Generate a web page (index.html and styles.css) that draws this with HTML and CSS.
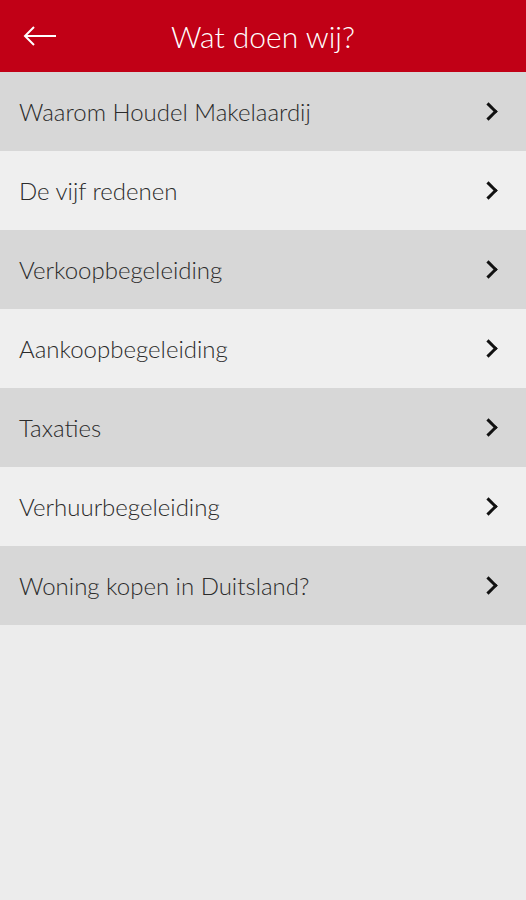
FILE: index.html
```html
<!DOCTYPE html>
<html lang="nl">
<head>
  <meta charset="UTF-8">
  <meta name="viewport" content="width=device-width, initial-scale=1.0">
  <title>Wat doen wij?</title>
  <link rel="stylesheet" href="styles.css">
</head>
<body>

  <header class="topbar">
    <span class="back">
      <svg width="34" height="20" viewBox="0 0 34 20"><path d="M33 10H2M11 1L2 10l9 9" fill="none" stroke="#fff" stroke-width="2"/></svg>
    </span>
    <h1>Wat doen wij?</h1>
  </header>

  <ul class="menu">
    <li class="row"><span>Waarom Houdel Makelaardij</span><i class="chev"></i></li>
    <li class="row"><span>De vijf redenen</span><i class="chev"></i></li>
    <li class="row"><span>Verkoopbegeleiding</span><i class="chev"></i></li>
    <li class="row"><span>Aankoopbegeleiding</span><i class="chev"></i></li>
    <li class="row"><span>Taxaties</span><i class="chev"></i></li>
    <li class="row"><span>Verhuurbegeleiding</span><i class="chev"></i></li>
    <li class="row"><span>Woning kopen in Duitsland?</span><i class="chev"></i></li>
  </ul>

</body>
</html>
```

FILE: styles.css
```css
body {
    margin: 0;
    background-color: #ececec;
    font-family: 'Lato', 'Open Sans', sans-serif;
    font-weight: 300;
}

.topbar {
    height: 72px;
    background-color: #c10016;
    display: flex;
    align-items: center;
    justify-content: center;
    position: relative;
}

.back {
    position: absolute;
    left: 23px;
    top: 26px;
}

.topbar h1 {
    margin: 0;
    color: #fff;
    font-weight: 300;
    font-size: 30px;
}

.menu {
    list-style: none;
    margin: 0;
    padding: 0;
}

.row {
    height: 79px;
    display: flex;
    align-items: center;
    justify-content: space-between;
    padding: 0 31px 0 19px;
    font-size: 24px;
    color: #2b2b2b;
    background-color: #efefef;
}

.row:nth-child(odd) {
    background-color: #d7d7d7;
}

.chev {
    width: 10px;
    height: 10px;
    border-top: 3.5px solid #111;
    border-right: 3.5px solid #111;
    transform: rotate(45deg);
}
```
